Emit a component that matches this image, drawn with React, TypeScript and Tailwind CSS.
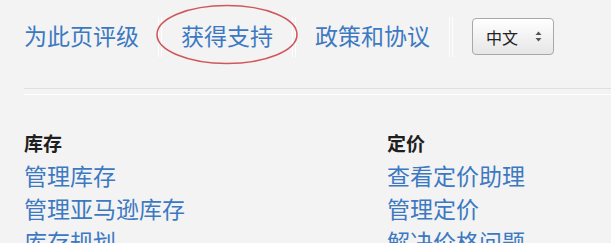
import React from "react";

const topLinks = ["为此页评级", "获得支持", "政策和协议"];

const columns = [
  { title: "库存", links: ["管理库存", "管理亚马逊库存", "库存规划"] },
  { title: "定价", links: ["查看定价助理", "管理定价", "解决价格问题"] },
];

function Divider() {
  return <div className="mx-[19px] h-[40px] w-[4px] border-x border-white bg-[#f2f2f2]" />;
}

function LangSelect() {
  return (
    <div className="flex h-[37px] w-[82px] items-center rounded-[4px] border border-[#a8a8a8] bg-gradient-to-b from-white to-[#e6e6e6] pl-[13px] shadow-[inset_0_1px_0_#fff]">
      <span className="text-[16px] leading-none text-[#222]">中文</span>
      <svg width="7" height="11" viewBox="0 0 7 11" className="ml-[17px]">
        <path d="M3.5 0.5 L6.5 4 L0.5 4 Z" fill="#555" />
        <path d="M3.5 10.5 L6.5 7 L0.5 7 Z" fill="#555" />
      </svg>
    </div>
  );
}

export default function App() {
  return (
    <div
      className="relative h-[243px] w-[611px] overflow-hidden bg-[#f3f3f3]"
      style={{ fontFamily: '"Noto Sans CJK SC", "Noto Sans", sans-serif' }}
    >
      <div className="flex h-[37px] items-center pl-[24px] mt-[18px]">
        {topLinks.map((t, i) => (
          <React.Fragment key={t}>
            {i > 0 && <Divider />}
            <a className="pb-[3px] text-[23px] leading-none text-[#3c79c2] whitespace-nowrap">{t}</a>
          </React.Fragment>
        ))}
        <Divider />
        <LangSelect />
      </div>

      <div className="ml-[24px] mt-[33px] h-px bg-[#e0e0e0]" />
      <div className="ml-[24px] mt-[5px] h-px bg-white" />

      <div className="mt-[31px] grid grid-cols-[363px_1fr] pl-[24px]">
        {columns.map((col) => (
          <div key={col.title} className="flex flex-col">
            <div className="text-[19px] font-bold leading-[33px] text-[#1e1e1e]">{col.title}</div>
            {col.links.map((l) => (
              <a key={l} className="text-[23px] leading-[33px] text-[#3c79c2] whitespace-nowrap">
                {l}
              </a>
            ))}
          </div>
        ))}
      </div>

      {/* red annotation circle */}
      <svg
        className="pointer-events-none absolute left-[155px] top-[4px]"
        width="144"
        height="61"
        viewBox="0 0 144 61"
      >
        <ellipse cx="72" cy="30.5" rx="70" ry="29" fill="none" stroke="#d0585c" strokeWidth="1.6" />
      </svg>
    </div>
  );
}
